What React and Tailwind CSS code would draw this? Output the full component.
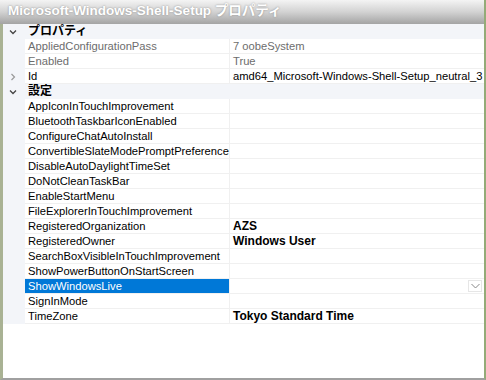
import React from "react";

const groups = [
  {
    title: "プロパティ",
    rows: [
      { name: "AppliedConfigurationPass", value: "7 oobeSystem", dim: true },
      { name: "Enabled", value: "True", dim: true },
      { name: "Id", value: "amd64_Microsoft-Windows-Shell-Setup_neutral_3", collapsed: true },
    ],
  },
  {
    title: "設定",
    rows: [
      { name: "AppIconInTouchImprovement" },
      { name: "BluetoothTaskbarIconEnabled" },
      { name: "ConfigureChatAutoInstall" },
      { name: "ConvertibleSlateModePromptPreference" },
      { name: "DisableAutoDaylightTimeSet" },
      { name: "DoNotCleanTaskBar" },
      { name: "EnableStartMenu" },
      { name: "FileExplorerInTouchImprovement" },
      { name: "RegisteredOrganization", value: "AZS", bold: true },
      { name: "RegisteredOwner", value: "Windows User", bold: true },
      { name: "SearchBoxVisibleInTouchImprovement" },
      { name: "ShowPowerButtonOnStartScreen" },
      { name: "ShowWindowsLive", selected: true },
      { name: "SignInMode" },
      { name: "TimeZone", value: "Tokyo Standard Time", bold: true },
    ],
  },
];

const Chevron = ({ open }) => (
  <svg width="8" height="8" viewBox="0 0 8 8" className="block">
    {open ? (
      <polyline points="1,2.5 4,5.5 7,2.5" fill="none" stroke="#444" strokeWidth="1.3" />
    ) : (
      <polyline points="2.5,1 5.5,4 2.5,7" fill="none" stroke="#999" strokeWidth="1.2" />
    )}
  </svg>
);

const PropRow = ({ row }) => (
  <div className="flex h-[15px]">
    <div className="w-[22px] shrink-0 bg-[#f3f5f9] flex items-center justify-center pr-[2px]">
      {row.collapsed && <Chevron open={false} />}
    </div>
    <div
      className={
        row.selected
          ? "w-[205px] shrink-0 bg-[#0078d7] text-white pl-[3px] leading-[15px] border-b border-[#f0f0f0] border-r whitespace-nowrap"
          : "w-[205px] shrink-0 pl-[3px] leading-[15px] border-b border-r border-[#f0f0f0] whitespace-nowrap " +
            (row.dim ? "text-[#6d6d6d]" : "text-black")
      }
    >
      {row.name}
    </div>
    <div
      className={
        "flex-1 min-w-0 relative pl-[3px] leading-[15px] border-b border-[#f0f0f0] whitespace-nowrap overflow-hidden " +
        (row.dim ? "text-[#6d6d6d]" : "text-black") +
        (row.bold ? " font-bold text-[12px]" : "")
      }
    >
      {row.value}
      {row.selected && (
        <div className="absolute right-[2px] top-[1px] w-[14px] h-[12px] bg-white border border-[#e6e6e6] flex items-center justify-center">
          <svg width="9" height="6" viewBox="0 0 9 6">
            <polyline points="0.5,1 4.5,5 8.5,1" fill="none" stroke="#888" strokeWidth="1" />
          </svg>
        </div>
      )}
    </div>
  </div>
);

export default function App() {
  return (
    <div
      className="w-[486px] h-[380px] bg-white flex flex-col overflow-hidden text-[11.2px]"
      style={{ fontFamily: '"Liberation Sans", "Noto Sans CJK JP", sans-serif' }}
    >
      <div className="h-[24px] shrink-0 flex bg-gradient-to-b from-[#f4f4f4] via-[#d2d2d2] to-[#a4a4a4]">
        <div className="flex-1 pl-[8px] pt-[2px] text-white font-bold text-[13.5px] leading-[18px] whitespace-nowrap [text-shadow:0_0_2px_#888]">
          Microsoft-Windows-Shell-Setup プロパティ
        </div>
        <div className="w-[2px] bg-[#94ab78]" />
      </div>
      <div className="flex-1 flex border-l-[3px] border-l-[#a9b294] border-r-[2px] border-r-[#94ab78] border-b-[2px] border-b-[#a0a0a0]">
        <div className="flex-1 flex flex-col">
          {groups.map((g) => (
            <div key={g.title} className="flex flex-col">
              <div className="flex h-[15px] bg-[#f3f5f9] items-center">
                <div className="w-[22px] shrink-0 flex items-center justify-center pr-[2px]">
                  <Chevron open />
                </div>
                <div className="pl-[3px] font-bold text-black text-[12px] leading-[15px]">{g.title}</div>
              </div>
              {g.rows.map((r) => (
                <PropRow key={r.name} row={r} />
              ))}
            </div>
          ))}
        </div>
      </div>
    </div>
  );
}
